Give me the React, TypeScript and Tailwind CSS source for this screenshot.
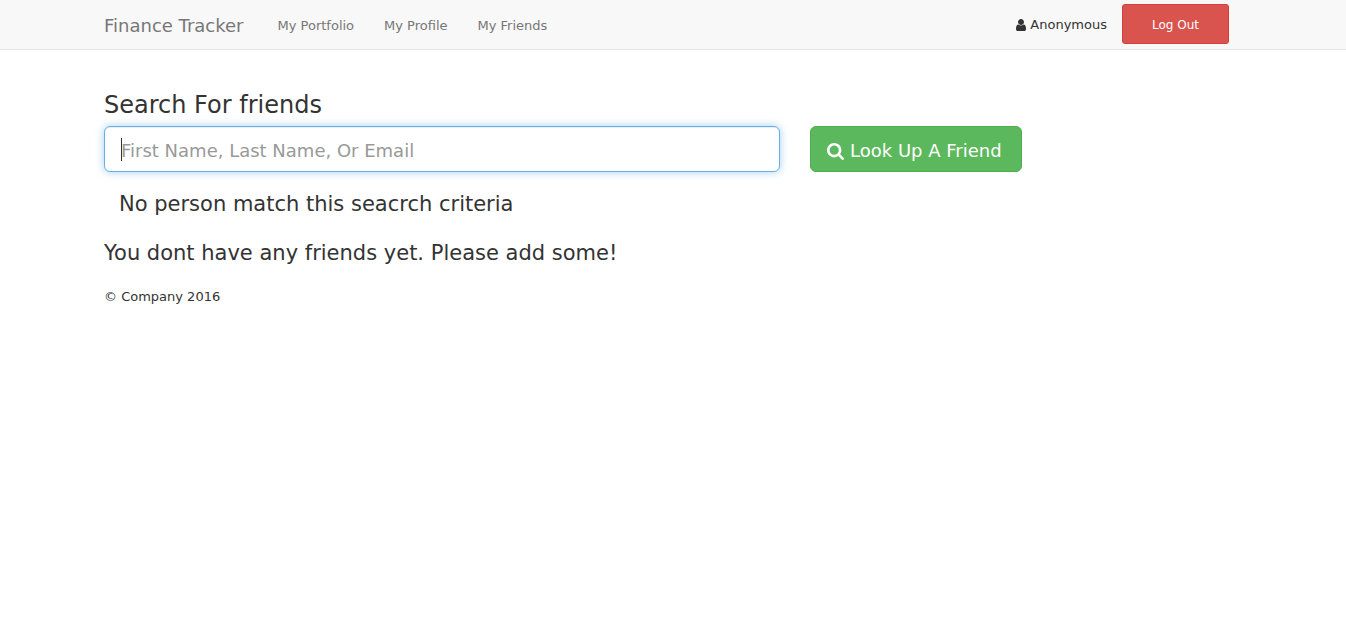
import { useState } from "react";

function UserIcon() {
  return (
    <svg aria-hidden="true" viewBox="256 128 1280 1536" className="h-3 w-[10px] fill-current">
      <path d="M1536 1399q0 109-62.5 187t-150.5 78h-854q-88 0-150.5-78t-62.5-187q0-85 8.5-160.5t31.5-152 58.5-131 94-89 134.5-34.5q131 128 313 128t313-128q76 0 134.5 34.5t94 89 58.5 131 31.5 152 8.5 160.5zm-256-887q0 159-112.5 271.5t-271.5 112.5-271.5-112.5-112.5-271.5 112.5-271.5 271.5-112.5 271.5 112.5 112.5 271.5z" />
    </svg>
  );
}

function SearchIcon() {
  return (
    <svg aria-hidden="true" viewBox="64 128 1664 1664" className="size-[17px] fill-current">
      <path d="M1216 832q0-185-131.5-316.5t-316.5-131.5-316.5 131.5-131.5 316.5 131.5 316.5 316.5 131.5 316.5-131.5 131.5-316.5zm512 832q0 52-38 90t-90 38q-54 0-90-38l-343-342q-179 124-399 124-143 0-273.5-55.5t-225-150-150-225-55.5-273.5 55.5-273.5 150-225 225-150 273.5-55.5 273.5 55.5 225 150 150 225 55.5 273.5q0 220-124 399l343 343q37 37 37 90z" />
    </svg>
  );
}

const links = ["My Portfolio", "My Profile", "My Friends"];

export default function App() {
  const [query, setQuery] = useState("");

  return (
    <div className="min-h-screen bg-white font-['Verdana','DejaVu_Sans',sans-serif] text-[13px] leading-5 text-[#333]">
      <nav className="min-h-[50px] border-b border-[#e7e7e7] bg-[#f8f8f8]">
        <div className="mx-auto flex max-w-[1138px] justify-between pr-[13px]">
          <div className="flex items-start pt-4 text-[#777]">
            <a href="#" className="text-lg leading-5">Finance Tracker</a>
            <div className="flex gap-[30px] pl-[34px]">
              {links.map((name) => (
                <a key={name} href="#">{name}</a>
              ))}
            </div>
          </div>
          <div className="flex items-center gap-[15px] py-1">
            <span className="flex items-center gap-1 pt-0.5">
              <UserIcon />
              Anonymous
            </span>
            <button className="h-10 w-[107px] rounded-[3px] border border-[#d43f3a] bg-[#d9534f] pt-0.5 text-xs text-white">Log Out</button>
          </div>
        </div>
      </nav>

      <main className="mx-auto max-w-[1138px] pt-[42px]">
        <form onSubmit={(e) => e.preventDefault()}>
          <label htmlFor="friend" className="block text-2xl leading-[26px]">Search For friends</label>
          <div className="mt-2 flex gap-[30px]">
            <div className="relative w-[676px]">
              <input
                id="friend"
                value={query}
                onChange={(e) => setQuery(e.target.value)}
                placeholder="First Name, Last Name, Or Email"
                className="peer h-[46px] w-full rounded-md border border-[#66afe9] bg-white px-4 pt-0.5 text-lg shadow-[inset_0_1px_1px_rgba(0,0,0,0.075),0_0_8px_rgba(102,175,233,0.6)] outline-none placeholder:text-[#999]"
              />
              <span className="pointer-events-none absolute top-3 left-[17px] hidden h-[23px] w-px bg-[#333] peer-placeholder-shown:block peer-focus:hidden" />
            </div>
            <button className="flex h-[46px] min-w-[212px] items-center gap-[6px] rounded-md border border-[#4cae4c] bg-[#5cb85c] px-4 pt-1 text-lg text-white">
              <SearchIcon />
              Look Up A Friend
            </button>
          </div>
        </form>
        <h3 className="mt-5 pl-[15px] text-[21px] leading-6">No person match this seacrch criteria</h3>
        <h3 className="mt-[25px] text-[21px] leading-6">You dont have any friends yet. Please add some!</h3>
        <footer className="mt-[22px]">© Company 2016</footer>
      </main>
    </div>
  );
}
